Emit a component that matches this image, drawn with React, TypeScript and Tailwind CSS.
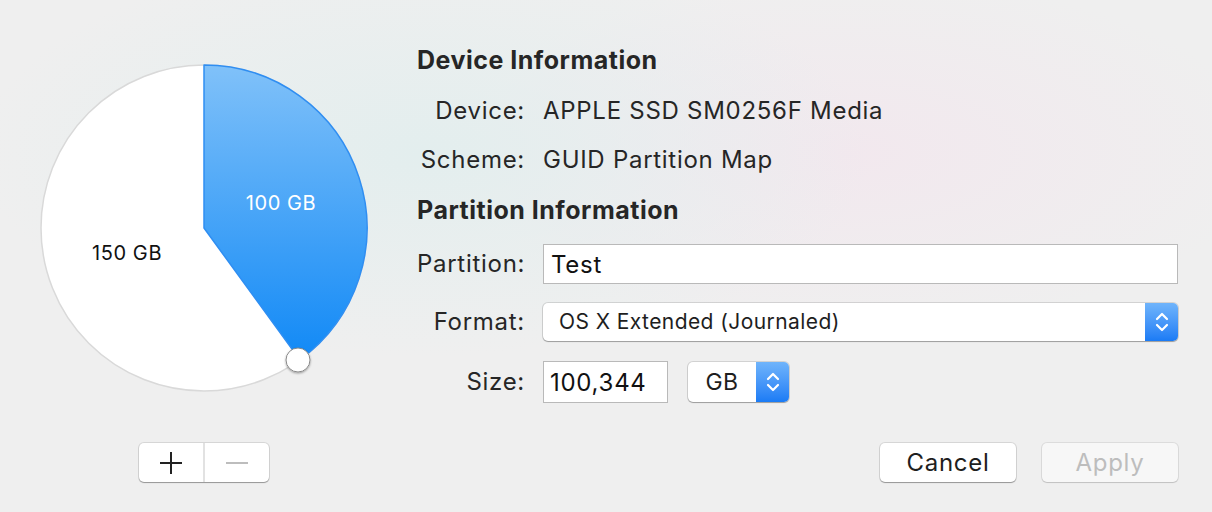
import React from "react";

function Chevrons() {
  return (
    <svg width="14" height="22" viewBox="0 0 14 22" fill="none">
      <path d="M2 8 L7 3 L12 8" stroke="white" strokeWidth="2.2" strokeLinecap="round" strokeLinejoin="round" />
      <path d="M2 14 L7 19 L12 14" stroke="white" strokeWidth="2.2" strokeLinecap="round" strokeLinejoin="round" />
    </svg>
  );
}

function PieChart() {
  // center 174,173 radius 163 ; blue slice = 100 of 250 GB (144deg)
  return (
    <svg width="350" height="350" viewBox="0 0 350 350" className="mt-[55px] ml-[30px] shrink-0">
      <defs>
        <linearGradient id="blue" x1="0" y1="0" x2="0" y2="1">
          <stop offset="0" stopColor="#80c1f9" />
          <stop offset="1" stopColor="#1189f6" />
        </linearGradient>
        <filter id="shadow" x="-50%" y="-50%" width="200%" height="200%">
          <feDropShadow dx="0" dy="1" stdDeviation="1" floodColor="#000" floodOpacity="0.35" />
        </filter>
      </defs>
      <circle cx="174" cy="173" r="163" fill="#ffffff" stroke="#d9d9d9" strokeWidth="1.5" />
      <path
        d="M174 173 L174 10 A163 163 0 0 1 269.81 304.87 Z"
        fill="url(#blue)"
        stroke="#2f8ef2"
        strokeWidth="1.5"
        strokeLinejoin="round"
      />
      <text x="251" y="148" textAnchor="middle" dominantBaseline="central" fill="#ffffff" fontSize="20" letterSpacing="0.6">
        100 GB
      </text>
      <text x="97" y="198" textAnchor="middle" dominantBaseline="central" fill="#111111" fontSize="20" letterSpacing="0.6">
        150 GB
      </text>
      <circle cx="268" cy="305" r="12" fill="#ffffff" stroke="#8a8a8a" strokeWidth="1" filter="url(#shadow)" />
    </svg>
  );
}

function Label({ children }: { children: React.ReactNode }) {
  return <div className="w-[108px] shrink-0 text-right text-[24px] tracking-[0.03em] text-[#262626]">{children}</div>;
}

export default function App() {
  return (
    <div
      className="relative w-[1212px] h-[512px] overflow-hidden bg-[#efefef] bg-[radial-gradient(ellipse_at_35%_30%,#e3eeee_0%,rgba(239,239,239,0)_40%),radial-gradient(ellipse_at_70%_30%,#f2e8ee_0%,rgba(239,239,239,0)_35%)]"
      style={{ fontFamily: "Inter, 'Noto Sans', sans-serif" }}
    >
      <div className="flex">
        <PieChart />

        <div className="ml-[37px] mt-[46px] flex w-[761px] flex-col text-[#262626]">
          <div className="flex h-[30px] items-center text-[25px] font-bold tracking-[0.02em]">Device Information</div>

          <div className="mt-[20px] flex h-[30px] items-center">
            <Label>Device:</Label>
            <div className="ml-[18px] text-[24px] tracking-[0.03em]">APPLE SSD SM0256F Media</div>
          </div>

          <div className="mt-[19px] flex h-[30px] items-center">
            <Label>Scheme:</Label>
            <div className="ml-[18px] text-[24px] tracking-[0.03em]">GUID Partition Map</div>
          </div>

          <div className="mt-[21px] flex h-[30px] items-center text-[25px] font-bold tracking-[0.02em]">Partition Information</div>

          <div className="mt-[18px] flex h-[40px] items-center">
            <Label>Partition:</Label>
            <div className="ml-[18px] flex h-[40px] flex-1 items-center border border-[#b9b9b9] bg-white pl-[7px] pt-[2px] text-[24px] tracking-[0.03em] text-[#111]">
              Test
            </div>
          </div>

          <div className="mt-[19px] flex h-[38px] items-center">
            <Label>Format:</Label>
            <div className="ml-[18px] flex h-[38px] flex-1 items-stretch rounded-[5px] bg-white shadow-[0_0_0_1px_rgba(0,0,0,0.12),0_1px_1px_rgba(0,0,0,0.25)]">
              <div className="flex flex-1 items-center pl-[16px] text-[21px] tracking-[0.02em] text-[#1e1e1e]">OS X Extended (Journaled)</div>
              <div className="flex w-[33px] items-center justify-center rounded-r-[5px] bg-gradient-to-b from-[#6fb4fb] to-[#1a7bf5]">
                <Chevrons />
              </div>
            </div>
          </div>

          <div className="mt-[20px] flex h-[42px] items-center">
            <Label>Size:</Label>
            <div className="ml-[18px] flex h-[42px] w-[125px] items-center border border-[#b9b9b9] bg-white pl-[6px] pt-[2px] text-[24px] tracking-[0.03em] text-[#111]">
              100,344
            </div>
            <div className="ml-[20px] flex h-[40px] w-[101px] items-stretch rounded-[5px] bg-white shadow-[0_0_0_1px_rgba(0,0,0,0.12),0_1px_1px_rgba(0,0,0,0.25)]">
              <div className="flex flex-1 items-center justify-center text-[23px] tracking-[0.02em] text-[#1e1e1e]">GB</div>
              <div className="flex w-[33px] items-center justify-center rounded-r-[5px] bg-gradient-to-b from-[#6fb4fb] to-[#1a7bf5]">
                <Chevrons />
              </div>
            </div>
          </div>
        </div>
      </div>

      <div className="mt-[38px] flex items-center pl-[139px] pr-[34px]">
        <div className="flex h-[39px] w-[130px] rounded-[5px] bg-white shadow-[0_0_0_1px_rgba(0,0,0,0.1),0_1px_1px_rgba(0,0,0,0.3)]">
          <div className="flex w-[66px] items-center justify-center border-r-2 border-[#e2e2e2]">
            <svg width="24" height="24" viewBox="0 0 24 24">
              <path d="M12 1 V23 M1 12 H23" stroke="#222" strokeWidth="2" />
            </svg>
          </div>
          <div className="flex flex-1 items-center justify-center">
            <svg width="24" height="4" viewBox="0 0 24 4">
              <path d="M1 2 H23" stroke="#bdbdbd" strokeWidth="2" />
            </svg>
          </div>
        </div>

        <div className="flex-1" />

        <button className="flex h-[39px] w-[136px] items-center justify-center rounded-[5px] bg-white text-[24px] tracking-[0.03em] text-[#1e1e1e] shadow-[0_0_0_1px_rgba(0,0,0,0.1),0_1px_1px_rgba(0,0,0,0.3)]">
          Cancel
        </button>
        <button className="ml-[26px] flex h-[39px] w-[136px] items-center justify-center rounded-[5px] bg-[#f7f7f7] text-[24px] tracking-[0.03em] text-[#bdbdbd] shadow-[0_0_0_1px_rgba(0,0,0,0.08),0_1px_1px_rgba(0,0,0,0.12)]">
          Apply
        </button>
      </div>
    </div>
  );
}
